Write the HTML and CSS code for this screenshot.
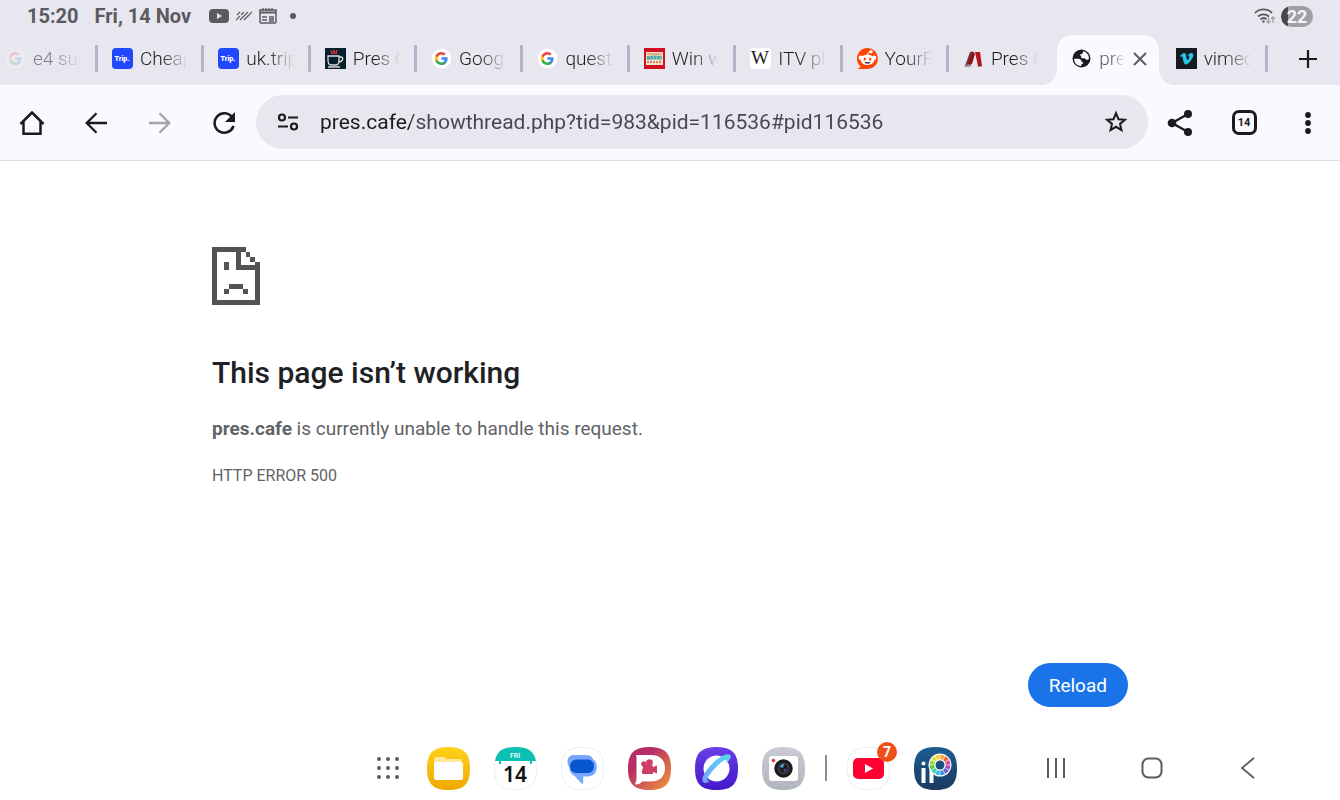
FILE: index.html
```html
<!DOCTYPE html>
<html lang="en">
<head>
    <meta charset="UTF-8">
    <meta name="viewport" content="width=device-width, initial-scale=1">
    <title>pres.cafe</title>
    <link rel="stylesheet" href="styles.css">
</head>
<body>
    <svg class="sprite" aria-hidden="true">
        <symbol id="google" viewBox="0 0 21 21">
            <circle cx="10.5" cy="10.5" r="9.8" fill="#fff"/>
            <g transform="translate(-1.8 -1.6) scale(1.15)">
                <path d="M16 10.6c0-.4 0-.8-.1-1.1h-5.300v2.200h3c-.2.700-.6 1.300-1.100 1.700v1.400h1.800c1.100-1 1.700-2.400 1.700-4.200z" fill="#4285f4"/>
                <path d="M10.6 16.2c1.500 0 2.800-.5 3.700-1.400l-1.800-1.400c-.5.300-1.100.5-1.900.5-1.500 0-2.700-1-3.200-2.300H5.500v1.500c1 1.800 2.900 3.100 5.100 3.100z" fill="#34a853"/>
                <path d="M7.4 11.6a3.500 3.500 0 0 1 0-2.200V7.900H5.500a5.700 5.700 0 0 0 0 5.200z" fill="#fbbc05"/>
                <path d="M10.6 7c.8 0 1.600.3 2.200.9l1.600-1.600a5.500 5.500 0 0 0-3.800-1.500c-2.200 0-4.100 1.300-5.100 3.100l1.900 1.500C7.900 8 9.100 7 10.600 7z" fill="#ea4335"/>
            </g>
        </symbol>
        <symbol id="trip" viewBox="0 0 21 21">
            <rect width="21" height="21" rx="4" fill="#2148ff"/>
            <text x="10" y="13" text-anchor="middle" class="trip-text">Trip.</text>
        </symbol>
    </svg>

    <div class="status-bar">
        <span class="status-time">15:20</span>
        <span class="status-date">Fri, 14 Nov</span>
        <div class="status-icons">
            <svg width="20" height="16" viewBox="0 0 20 16">
                <rect y="1" width="20" height="14" rx="4" fill="#5b5a61"/>
                <path d="M8 5l5 3-5 3z" fill="#e8e6ef"/>
            </svg>
            <svg width="16" height="16" viewBox="0 0 16 16" stroke="#5b5a61" stroke-width="1.2">
                <path d="M1 7l3-3M5 7l3-3M9 7l3-3M0 12l4-4M4 12l5-5M8 12l4-4M12 8l4-4"/>
            </svg>
            <svg width="18" height="16" viewBox="0 0 18 16" fill="none" stroke="#5b5a61">
                <path d="M1 2h16v12a1 1 0 0 1-1 1H2a1 1 0 0 1-1-1z" stroke-width="1.5"/>
                <path d="M1 4.500h16" stroke-width="2"/>
                <path d="M4 0v3M7 0v3M10 0v3M13 0v3M3 9h5M3 12h5M10 9h5M10 11h5M10 13h5" stroke-width="1.3"/>
            </svg>
            <span class="status-dot"></span>
        </div>
        <div class="status-right">
            <svg width="22" height="18" viewBox="0 0 22 18" fill="none" stroke="#5b5a61" stroke-width="1.8">
                <path d="M1 6a12 12 0 0 1 17 0M4 9.500a8 8 0 0 1 11 0M6.500 12.500a4.500 4.500 0 0 1 6-.2"/>
                <circle cx="9.5" cy="14.5" r="1.2" fill="#5b5a61" stroke="none"/>
                <path d="M14.500 10v6m-2-2l2 2 2-2M19 16v-6m-2 2l2-2 2 2" stroke="#a3a1a9" stroke-width="1.3"/>
            </svg>
            <span class="battery">22</span>
        </div>
    </div>

    <nav class="tabs" aria-label="Tabs">
        <div class="tab tab-first">
            <a class="tab-link" href="#">
                <svg class="favicon"><use href="#google"/></svg>
                <span class="tab-title">e4 sup</span>
            </a>
        </div>
        <div class="tab">
            <a class="tab-link" href="#">
                <svg class="favicon"><use href="#trip"/></svg>
                <span class="tab-title">Cheap</span>
            </a>
        </div>
        <div class="tab">
            <a class="tab-link" href="#">
                <svg class="favicon"><use href="#trip"/></svg>
                <span class="tab-title">uk.trip</span>
            </a>
        </div>
        <div class="tab">
            <a class="tab-link" href="#">
                <svg class="favicon" viewBox="0 0 21 21">
                    <rect width="21" height="21" fill="#07202e"/>
                    <path d="M6 2l1 4M9 2l-1 4M9 2l1 4M12 2l-1 4" stroke="#c8343f" stroke-width="1.3" fill="none"/>
                    <path d="M3 8h11v4c0 3-1 5-3 5H6c-2 0-3-2-3-5zM14 9h2c3 0 2 5-2.500 5M3 19h12" stroke="#dcdcd4" stroke-width="1.3" fill="none"/>
                </svg>
                <span class="tab-title">Pres C</span>
            </a>
        </div>
        <div class="tab">
            <a class="tab-link" href="#">
                <svg class="favicon"><use href="#google"/></svg>
                <span class="tab-title">Goog</span>
            </a>
        </div>
        <div class="tab">
            <a class="tab-link" href="#">
                <svg class="favicon"><use href="#google"/></svg>
                <span class="tab-title">quest</span>
            </a>
        </div>
        <div class="tab">
            <a class="tab-link" href="#">
                <svg class="favicon" viewBox="0 0 21 21">
                    <rect width="21" height="21" fill="#cf1020"/>
                    <rect x="2" y="4" width="17" height="13" fill="#f3e3cf"/>
                    <path d="M3 6h15" stroke="#e79a5c" stroke-width="1.5"/>
                    <path d="M3 10q7-1 15 0" fill="none" stroke="#53aaa5" stroke-width="4" stroke-dasharray="3 .4"/>
                    <path d="M3 14h15" stroke="#de8060" stroke-width="2" stroke-dasharray="2 1"/>
                </svg>
                <span class="tab-title">Win w</span>
            </a>
        </div>
        <div class="tab">
            <a class="tab-link" href="#">
                <svg class="favicon" viewBox="0 0 21 21">
                    <rect width="21" height="21" rx="3" fill="#fff"/>
                    <text x="10" y="16" text-anchor="middle" class="wiki-text">W</text>
                </svg>
                <span class="tab-title">ITV pl</span>
            </a>
        </div>
        <div class="tab">
            <a class="tab-link" href="#">
                <svg class="favicon" viewBox="0 0 21 21">
                    <path d="M10.500 0a10.500 10.500 0 1 1 0 21H1l2.600-2.600A10.500 10.500 0 0 1 10.500 0z" fill="#ff4500"/>
                    <circle cx="3.8" cy="9.8" r="2.2" fill="#fff"/>
                    <circle cx="17.2" cy="9.8" r="2.2" fill="#fff"/>
                    <circle cx="14" cy="3.8" r="1.7" fill="#fff"/>
                    <path d="M10.500 7c0-2 1-3 3-3.200" stroke="#fff" stroke-width="1" fill="none"/>
                    <ellipse cx="10.5" cy="11.8" rx="6.8" ry="5.3" fill="#fff"/>
                    <ellipse cx="7.8" cy="11" rx="1.2" ry="1.5" fill="#ff4500"/>
                    <ellipse cx="13.2" cy="11" rx="1.2" ry="1.5" fill="#ff4500"/>
                    <path d="M7.500 13.800c2 .5 4 .5 6 0-.5 2.500-5.500 2.500-6 0z" fill="#26303a"/>
                </svg>
                <span class="tab-title">YourF</span>
            </a>
        </div>
        <div class="tab tab-no-line">
            <a class="tab-link" href="#">
                <svg class="favicon" viewBox="0 0 21 21">
                    <path d="M2 18L7 4h4L7 19H2z" fill="#6b3a40"/>
                    <path d="M4 17L9 3l3 3-3 10-5 2z" fill="#8e1218"/>
                    <path d="M12 4h5l2 14h-4z" fill="#b3141a"/>
                    <path d="M1 18l5-2 2 3H2zM14 18h5v1h-4z" fill="#9c989e"/>
                </svg>
                <span class="tab-title">Pres C</span>
            </a>
        </div>
        <div class="tab tab-active">
            <a class="tab-link" href="#" aria-current="page">
                <svg class="favicon" viewBox="0 0 21 21">
                    <circle cx="10.5" cy="10.5" r="9" fill="#1b1b1f"/>
                    <path d="M12 3.200c3.500.6 6 3.400 6 7.300-.5.900-1.200 1.300-2.300 1.200-1-.1-1.500-.6-1.700-1.500h-2.500c-1 0-1.500-.6-1.300-1.500.1-.7-.3-1.100-1-1.300V6.200c1.300.1 2.200-.2 2.600-1.200z" fill="#faf9ff"/>
                    <path d="M3.100 10.700H7c2 0 3.300 1 3.500 2.500.1.800.6 1 1.500 1v1.600c-1 0-1.700.3-1.700 1.200v.9c-4.200.1-7.300-3-7.200-7.200z" fill="#faf9ff"/>
                </svg>
                <span class="tab-title">pre</span>
            </a>
            <button class="tab-close" aria-label="Close tab">
                <svg width="14" height="14" viewBox="0 0 14 14" stroke="#5b5a61" stroke-width="2">
                    <path d="M1 1l12 12M13 1L1 13"/>
                </svg>
            </button>
        </div>
        <div class="tab">
            <a class="tab-link" href="#">
                <svg class="favicon" viewBox="0 0 21 21">
                    <rect width="21" height="21" fill="#141a20"/>
                    <path d="M4 8c2-2 3-3 4.200-3 1.600 0 1.800 1.700 2.200 4 .3 2 .6 3 1.100 3 .6 0 1.900-2 1.900-3 0-.8-.6-1-1.500-.7C12.500 6 14 4.800 15.600 4.900c1.500.1 2 1.300 1.600 3.200-.6 3-4.800 8.400-7.200 8.400-2 0-2.400-2.500-2.900-5C6.700 9.500 6.600 8.200 6 8.200c-.3 0-.7.300-1.200.7z" fill="#27c5ee"/>
                </svg>
                <span class="tab-title">vimeo</span>
            </a>
        </div>
        <button class="new-tab" aria-label="New tab">
            <svg width="20" height="20" viewBox="0 0 20 20" stroke="#1b1b1f" stroke-width="2.2">
                <path d="M10 1v18M1 10h18"/>
            </svg>
        </button>
    </nav>

    <div class="toolbar">
        <button class="tool" aria-label="Home">
            <svg width="26" height="26" viewBox="0 0 26 26" fill="none" stroke="#1b1b1f" stroke-width="2.5">
                <path d="M1.500 14L13 2.500 24.500 14M4.500 11.500v12.200h17V11.500"/>
            </svg>
        </button>
        <button class="tool" aria-label="Back">
            <svg width="22" height="22" viewBox="0 0 22 22" fill="none" stroke="#1b1b1f" stroke-width="2.3">
                <path d="M22 11H2M11.500 1.200L1.700 11l9.800 9.800"/>
            </svg>
        </button>
        <button class="tool" aria-label="Forward" disabled>
            <svg width="22" height="22" viewBox="0 0 22 22" fill="none" stroke="#a4a3a8" stroke-width="2.3">
                <path d="M0 11h20M10.500 1.200l9.800 9.800-9.800 9.800"/>
            </svg>
        </button>
        <button class="tool" aria-label="Refresh">
            <svg width="24" height="24" viewBox="0 0 24 24" fill="none" stroke="#1b1b1f" stroke-width="2.6">
                <path d="M20.300 6.500A9.700 9.700 0 1 0 21.500 15"/>
                <path d="M23 1v10H13z" fill="#1b1b1f" stroke="none"/>
            </svg>
        </button>
        <form class="omnibox">
            <button class="omnibox-button" type="button" aria-label="Site information">
                <svg width="22" height="18" viewBox="0 0 22 18" fill="none" stroke="#1b1b1f" stroke-width="2.2">
                    <circle cx="5" cy="4.5" r="3"/>
                    <circle cx="17" cy="13.5" r="3"/>
                    <path d="M11 4.500h10M1 13.500h10"/>
                </svg>
            </button>
            <input class="url" type="text" aria-label="Address" value="pres.cafe/showthread.php?tid=983&amp;pid=116536#pid116536">
            <button class="omnibox-button" type="button" aria-label="Bookmark">
                <svg width="24" height="24" viewBox="0 0 24 24" fill="none" stroke="#1b1b1f" stroke-width="2">
                    <path d="M12 3.200l2.500 6 6.400.5-4.900 4.200 1.500 6.300-5.500-3.400-5.500 3.400L8 13.900 3.100 9.700l6.400-.5z"/>
                </svg>
            </button>
        </form>
        <button class="tool" aria-label="Share">
            <svg width="26" height="28" viewBox="0 0 26 28" fill="#1b1b1f">
                <path d="M21 5L5 14l16 9" fill="none" stroke="#1b1b1f" stroke-width="2.4"/>
                <circle cx="21" cy="5" r="4"/>
                <circle cx="5" cy="14" r="4.3"/>
                <circle cx="21" cy="23" r="4"/>
            </svg>
        </button>
        <button class="tool" aria-label="Switch tabs"><span class="tab-count">14</span></button>
        <button class="tool" aria-label="More">
            <svg width="6" height="24" viewBox="0 0 6 24" fill="#1b1b1f">
                <circle cx="3" cy="4" r="2.9"/>
                <circle cx="3" cy="12" r="2.9"/>
                <circle cx="3" cy="20" r="2.9"/>
            </svg>
        </button>
    </div>

    <main class="page">
        <svg class="sad-page" viewBox="0 0 40 48" fill="#535353" shape-rendering="crispEdges">
            <path d="M0 0h28v4h-4v11h12v-3h4v36H0zM4 4v40h32V19H20V4z" fill-rule="evenodd"/>
            <path d="M28 4h4v4h-4zM32 8h4v4h-4zM10 12h4v7h-4zM14 31h12v4H14zM10 35h4v4h-4zM26 35h4v4h-4z"/>
        </svg>
        <h1 class="page-title">This page isn’t working</h1>
        <p class="page-text"><strong>pres.cafe</strong> is currently unable to handle this request.</p>
        <p class="page-code">HTTP ERROR 500</p>
        <button class="reload">Reload</button>
    </main>

    <footer class="dock">
        <div class="dock-apps">
            <button class="dock-all" aria-label="All apps">
                <svg width="22" height="22" viewBox="0 0 22 22" fill="#5c5c5c">
                    <circle cx="2" cy="2" r="2"/><circle cx="11" cy="2" r="2"/><circle cx="20" cy="2" r="2"/>
                    <circle cx="2" cy="11" r="2"/><circle cx="11" cy="11" r="2"/><circle cx="20" cy="11" r="2"/>
                    <circle cx="2" cy="20" r="2"/><circle cx="11" cy="20" r="2"/><circle cx="20" cy="20" r="2"/>
                </svg>
            </button>
            <div class="dock-group">
                <a class="app" href="#" aria-label="My Files">
                    <svg viewBox="0 0 43 43">
                        <defs>
                            <linearGradient id="files-bg" x2="0" y2="1"><stop stop-color="#ffd11a"/><stop offset="1" stop-color="#efa800"/></linearGradient>
                        </defs>
                        <path d="M21.500 0C37 0 43 6 43 21.500S37 43 21.500 43 0 37 0 21.500 6 0 21.500 0z" fill="url(#files-bg)"/>
                        <path d="M7 19v-7a2 2 0 0 1 2-2h8l3 2h13a2 2 0 0 1 2 2v5z" fill="#ffe89a"/>
                        <rect x="7" y="15" width="29" height="18" rx="2.5" fill="#fff"/>
                    </svg>
                </a>
                <a class="app" href="#" aria-label="Calendar">
                    <svg viewBox="0 0 43 43">
                        <path d="M21.500.5C36.500.5 42.500 6.500 42.500 21.500s-6 21-21 21-21-6-21-21 6-21 21-21z" fill="#fff" stroke="#ececec"/>
                        <path d="M1 14C3 4 9 0 21.500 0S40 4 42 14h-4v3h-2v-3H7v3H5v-3z" fill="#0bc0b2"/>
                        <text x="21" y="11" text-anchor="middle" class="cal-day">FRI</text>
                        <text x="21" y="35" text-anchor="middle" class="cal-date">14</text>
                    </svg>
                </a>
                <a class="app" href="#" aria-label="Messages">
                    <svg viewBox="0 0 43 43">
                        <path d="M21.500.5C36.500.5 42.500 6.500 42.500 21.500s-6 21-21 21-21-6-21-21 6-21 21-21z" fill="#fff" stroke="#ececec"/>
                        <path d="M13 8h12c4 0 6.500 2 7.200 4.600 2.300 1.200 3.600 3.600 3.600 7.400 0 6-4 9.500-9 9.500h-4.600v6.300c0 1-.9 1.300-1.600.6l-7-7.300C10 27 8.500 24.500 8.500 20.500 7.200 18.800 6.500 17 6.500 14.500 6.500 10.500 9 8 13 8z" fill="#78a7ff"/>
                        <path d="M16 12.500h10.500c4 0 6.500 2.700 6.500 6.700s-2.500 6.800-6.500 6.800H16c-4.200 0-7-2.800-7-6.800s2.800-6.700 7-6.700z" fill="#0957d0"/>
                    </svg>
                </a>
                <a class="app" href="#" aria-label="Video">
                    <svg viewBox="0 0 43 43">
                        <defs>
                            <linearGradient id="video-bg" x2="1" y2="1"><stop offset=".3" stop-color="#b62b68"/><stop offset="1" stop-color="#f39a35"/></linearGradient>
                        </defs>
                        <path d="M21.500 0C37 0 43 6 43 21.500S37 43 21.500 43 0 37 0 21.500 6 0 21.500 0z" fill="url(#video-bg)"/>
                        <path d="M8 8h15c9 0 14 5 14 13 0 9-6 13.500-14 13.500h-9c-1 2-3 3-7 3 1-3 1.500-4 1.500-7V12C8.500 10 8.500 9 8 8z" fill="#fff"/>
                        <g fill="#cb3f64">
                            <circle cx="16" cy="17" r="2.8"/>
                            <circle cx="21.5" cy="15.5" r="3.3"/>
                            <path d="M15 20c0-1 1-2 2-2h6c1.500 0 2 .8 2 2l4-1.500v8L25 25v2H15.500c-2 0-1.500-2-1.500-3z"/>
                        </g>
                    </svg>
                </a>
                <a class="app" href="#" aria-label="Internet">
                    <svg viewBox="0 0 43 43">
                        <defs>
                            <linearGradient id="net-bg" x2="0" y2="1"><stop stop-color="#6a3ee8"/><stop offset="1" stop-color="#4417c9"/></linearGradient>
                            <linearGradient id="net-ring" x1="1" x2="0" y2="1"><stop stop-color="#56d8f4"/><stop offset="1" stop-color="#75a2fa"/></linearGradient>
                        </defs>
                        <path d="M21.500 0C37 0 43 6 43 21.500S37 43 21.500 43 0 37 0 21.500 6 0 21.500 0z" fill="url(#net-bg)"/>
                        <circle cx="21.5" cy="21.5" r="13" fill="#fff"/>
                        <path d="M35 8c-3-2.500-11 2-17.500 8.500C10 24 5.500 32 8 35c1.300 1.500 4 1 7-.7-3 .3-3.500-2-1-5.800 2-3 4.500-6 7.500-9 4.500-4.300 8.500-7.300 10-6.500.8.600.3 2-.8 4C35 12.500 37 9.800 35 8z" fill="url(#net-ring)"/>
                    </svg>
                </a>
                <a class="app" href="#" aria-label="Camera">
                    <svg viewBox="0 0 43 43">
                        <defs>
                            <linearGradient id="cam-bg" x2="0" y2="1"><stop stop-color="#c9ccd2"/><stop offset="1" stop-color="#b1b5bc"/></linearGradient>
                        </defs>
                        <path d="M21.500 0C37 0 43 6 43 21.500S37 43 21.500 43 0 37 0 21.500 6 0 21.500 0z" fill="url(#cam-bg)"/>
                        <rect x="7" y="9" width="29" height="25" rx="3" fill="#fff"/>
                        <circle cx="11.5" cy="13.5" r="1.8" fill="#e5322d"/>
                        <circle cx="21.5" cy="21.5" r="9.2" fill="#1c1c1e"/>
                        <circle cx="21.5" cy="21.5" r="5.8" fill="#39414d"/>
                        <circle cx="21.5" cy="21.5" r="4" fill="#17191f"/>
                        <path d="M18 20a4 4 0 0 1 4-3l-1 4z" fill="#4fa5c6"/>
                        <circle cx="23" cy="23" r="1.5" fill="#50467c"/>
                    </svg>
                </a>
            </div>
            <span class="dock-line"></span>
            <div class="dock-group">
                <a class="app" href="#" aria-label="YouTube">
                    <svg viewBox="0 0 43 43">
                        <path d="M21.500.5C36.500.5 42.500 6.500 42.500 21.500s-6 21-21 21-21-6-21-21 6-21 21-21z" fill="#fff" stroke="#ececec"/>
                        <rect x="6" y="11" width="31" height="21" rx="5" fill="#ff0033"/>
                        <path d="M18 17l8 4.500-8 4.500z" fill="#fff"/>
                    </svg>
                    <span class="badge">7</span>
                </a>
                <a class="app" href="#" aria-label="ibis Paint">
                    <svg viewBox="0 0 43 43">
                        <defs>
                            <linearGradient id="paint-bg" x2="0" y2="1"><stop stop-color="#1a5f94"/><stop offset="1" stop-color="#1b3960"/></linearGradient>
                        </defs>
                        <path d="M21.500 0C37 0 43 6 43 21.500S37 43 21.500 43 0 37 0 21.500 6 0 21.500 0z" fill="url(#paint-bg)"/>
                        <circle cx="9.5" cy="16.5" r="2" fill="#fff"/>
                        <path d="M9.500 21v15M17.500 18v18" stroke="#fff" stroke-width="4"/>
                        <circle cx="26" cy="18" r="11.5" fill="#fff"/>
                        <g fill="none" stroke-width="4.6" transform="translate(26 18)">
                            <path d="M0-8A8 8 0 0 1 4-6.900" stroke="#f2a33a"/>
                            <path d="M4-6.900A8 8 0 0 1 6.900-4" stroke="#ef6a3b"/>
                            <path d="M6.900-4A8 8 0 0 1 8 0" stroke="#d84a9b"/>
                            <path d="M8 0A8 8 0 0 1 6.900 4" stroke="#a04cc4"/>
                            <path d="M6.900 4A8 8 0 0 1 4 6.900" stroke="#6a5bd0"/>
                            <path d="M4 6.900A8 8 0 0 1 0 8" stroke="#3f8fe0"/>
                            <path d="M0 8A8 8 0 0 1-4 6.900" stroke="#37bfe0"/>
                            <path d="M-4 6.900A8 8 0 0 1-6.900 4" stroke="#3fcf9a"/>
                            <path d="M-6.900 4A8 8 0 0 1-8 0" stroke="#59c94b"/>
                            <path d="M-8 0A8 8 0 0 1-6.900-4" stroke="#9bd43c"/>
                            <path d="M-6.900-4A8 8 0 0 1-4-6.900" stroke="#d9dd3c"/>
                            <path d="M-4-6.900A8 8 0 0 1 0-8" stroke="#f5cf3d"/>
                            <path d="M0-11V11M-11 0H11M-5.500-9.500L5.500 9.500M5.500-9.500L-5.500 9.500M-9.500-5.500L9.500 5.500M-9.500 5.500L9.500-5.500" stroke="#fff" stroke-width=".6"/>
                        </g>
                        <circle cx="26" cy="18" r="4.5" fill="#1b4f80"/>
                    </svg>
                </a>
            </div>
        </div>
        <div class="dock-nav">
            <button class="nav-button" aria-label="Recents">
                <svg width="22" height="22" viewBox="0 0 22 22" stroke="#5c5c5c" stroke-width="2">
                    <path d="M3 1v20M11 1v20M19 1v20"/>
                </svg>
            </button>
            <button class="nav-button" aria-label="Home screen">
                <svg width="22" height="22" viewBox="0 0 22 22" fill="none" stroke="#5c5c5c" stroke-width="2">
                    <rect x="1.5" y="1.5" width="19" height="19" rx="6"/>
                </svg>
            </button>
            <button class="nav-button" aria-label="Go back">
                <svg width="22" height="22" viewBox="0 0 22 22" fill="none" stroke="#5c5c5c" stroke-width="1.8">
                    <path d="M17 1L5 11l12 10"/>
                </svg>
            </button>
        </div>
    </footer>
</body>
</html>
```

FILE: styles.css
```css
* {
    box-sizing: border-box;
}

body {
    margin: 0;
    min-height: 100vh;
    display: flex;
    flex-direction: column;
    font-family: Roboto, "Noto Sans", sans-serif;
    background: #ffffff;
    color: #1b1b1f;
}

button {
    padding: 0;
    border: none;
    background: none;
    font-family: inherit;
    color: inherit;
    cursor: pointer;
    display: flex;
    align-items: center;
    justify-content: center;
}

a {
    color: inherit;
    text-decoration: none;
}

svg {
    display: block;
    flex: none;
}

.sprite {
    position: absolute;
    width: 0;
    height: 0;
}

/* Android status bar */
.status-bar {
    display: flex;
    align-items: center;
    height: 32px;
    padding: 0 27px;
    gap: 16px;
    background: #e8e6ef;
    color: #5b5a61;
    font-size: 20px;
    font-weight: 700;
    line-height: 32px;
}

.status-icons {
    display: flex;
    align-items: center;
    gap: 7px;
    margin-left: 2px;
}

.status-dot {
    width: 6px;
    height: 6px;
    margin-left: 6px;
    border-radius: 50%;
    background: #5b5a61;
}

.status-right {
    display: flex;
    align-items: center;
    gap: 5px;
    margin-left: auto;
}

.battery {
    width: 32px;
    height: 21px;
    border-radius: 11px;
    background: linear-gradient(90deg, #48474c 7px, #a09fa5 7px);
    color: #f4f3f8;
    font-size: 18px;
    line-height: 21px;
    text-align: center;
}

/* Tab strip */
.tabs {
    display: grid;
    grid-template-columns: 98px repeat(11, minmax(0, 1fr)) 72px;
    height: 53px;
    background: #e8e6ef;
}

.tab {
    display: flex;
    align-items: center;
    padding-left: 14px;
}

.tab::after {
    content: "";
    width: 3px;
    height: 27px;
    border-radius: 1px;
    background: #b0b5cb;
}

.tab-link {
    flex: 1;
    min-width: 0;
    display: flex;
    align-items: center;
    gap: 7px;
    margin-right: 14px;
}

.favicon {
    width: 21px;
    height: 21px;
}

.tab-title {
    flex: 1;
    min-width: 0;
    overflow: hidden;
    white-space: nowrap;
    font-size: 19px;
    font-weight: 300;
    line-height: 26px;
    -webkit-mask-image: linear-gradient(90deg, #000 45%, transparent);
    mask-image: linear-gradient(90deg, #000 45%, transparent);
}

.tab-first {
    padding-left: 5px;
}

.tab-first .favicon {
    opacity: 0.2;
}

.tab-first .tab-title {
    color: #85848c;
}

.tab-no-line::after {
    background: none;
}

.tab-active {
    position: relative;
    margin: 3px 3px 0 2px;
    padding-right: 12px;
    padding-bottom: 3px;
    border-radius: 15px 15px 0 0;
    background: #faf9ff;
}

.tab-active .tab-link {
    margin-right: 8px;
}

.tab-active .tab-title {
    color: #5b5a61;
}

/* curved feet of the selected tab */
.tab-active::before,
.tab-active::after {
    content: "";
    position: absolute;
    bottom: 0;
    width: 16px;
    height: 16px;
    border-radius: 0;
}

.tab-active::before {
    right: 100%;
    background: radial-gradient(circle at 0 0, transparent 16px, #faf9ff 16px);
}

.tab-active::after {
    left: 100%;
    background: radial-gradient(circle at 100% 0, transparent 16px, #faf9ff 16px);
}

.new-tab {
    padding-left: 8px;
}

.trip-text {
    font-size: 7px;
    font-weight: 900;
    fill: #ffffff;
}

.wiki-text {
    font-family: "Liberation Serif", serif;
    font-size: 19px;
    fill: #1b1b1f;
}

/* Toolbar */
.toolbar {
    display: flex;
    align-items: center;
    height: 76px;
    border-bottom: 1px solid #dddce3;
    background: #faf9ff;
}

.tool {
    width: 64px;
    height: 54px;
}

.omnibox {
    flex: 1;
    min-width: 0;
    display: flex;
    align-items: center;
    height: 54px;
    margin-bottom: 2px;
    border-radius: 27px;
    background: #e8e6ef;
}

.omnibox-button {
    width: 64px;
    height: 54px;
}

/* host part is darker than the path */
.url {
    flex: 1;
    min-width: 0;
    padding: 0;
    border: none;
    outline: none;
    font-family: inherit;
    font-size: 21px;
    line-height: 28px;
    color: #45464f;
    background: linear-gradient(90deg, #1b1b1f 90px, #45464f 90px);
    -webkit-background-clip: text;
    background-clip: text;
    -webkit-text-fill-color: transparent;
}

.tab-count {
    width: 25px;
    height: 25px;
    border: 3px solid #1b1b1f;
    border-radius: 7px;
    font-size: 11px;
    font-weight: 700;
    line-height: 20px;
    text-align: center;
}

/* Error page */
.page {
    flex: 1;
    display: flex;
    flex-direction: column;
    align-items: flex-start;
    width: 100%;
    max-width: 964px;
    margin: 0 auto;
    padding: 86px 24px 29px;
    color: #5f6368;
}

.sad-page {
    width: 48px;
    height: 58px;
}

.page-title {
    margin: 48px 0 0;
    font-size: 30px;
    font-weight: 500;
    line-height: 40px;
    color: #202124;
}

.page-text {
    margin: 21px 0 0;
    font-size: 19px;
    line-height: 30px;
}

.page-code {
    margin: 20px 0 0;
    font-size: 16px;
    line-height: 24px;
}

.reload {
    margin-top: auto;
    margin-left: auto;
    height: 44px;
    padding: 0 21px;
    border-radius: 22px;
    background: #1a73e8;
    color: #ffffff;
    font-size: 19px;
}

/* Taskbar */
.dock {
    display: grid;
    grid-template-columns: 1fr auto 1fr;
    align-items: center;
    height: 64px;
    padding-right: 6px;
}

.dock-apps {
    grid-column: 2;
    display: flex;
    align-items: center;
}

.dock-all {
    margin-right: 28px;
}

.dock-group {
    display: flex;
    gap: 24px;
}

.app {
    position: relative;
    width: 43px;
    height: 43px;
}

.badge {
    position: absolute;
    top: -5px;
    right: -7px;
    width: 20px;
    height: 20px;
    border-radius: 50%;
    background: #f04e1a;
    color: #ffffff;
    font-size: 14px;
    font-weight: 700;
    line-height: 20px;
    text-align: center;
}

.cal-day {
    font-size: 7px;
    font-weight: 500;
    fill: #ffffff;
}

.cal-date {
    font-family: "Noto Sans", sans-serif;
    font-size: 21px;
    font-weight: 600;
    fill: #111111;
}

.dock-line {
    width: 2px;
    height: 26px;
    margin: 0 20px;
    background: #8c8c8c;
}

.dock-nav {
    display: flex;
    justify-content: flex-end;
    padding-right: 38px;
}

.nav-button {
    width: 96px;
    height: 48px;
}
```
